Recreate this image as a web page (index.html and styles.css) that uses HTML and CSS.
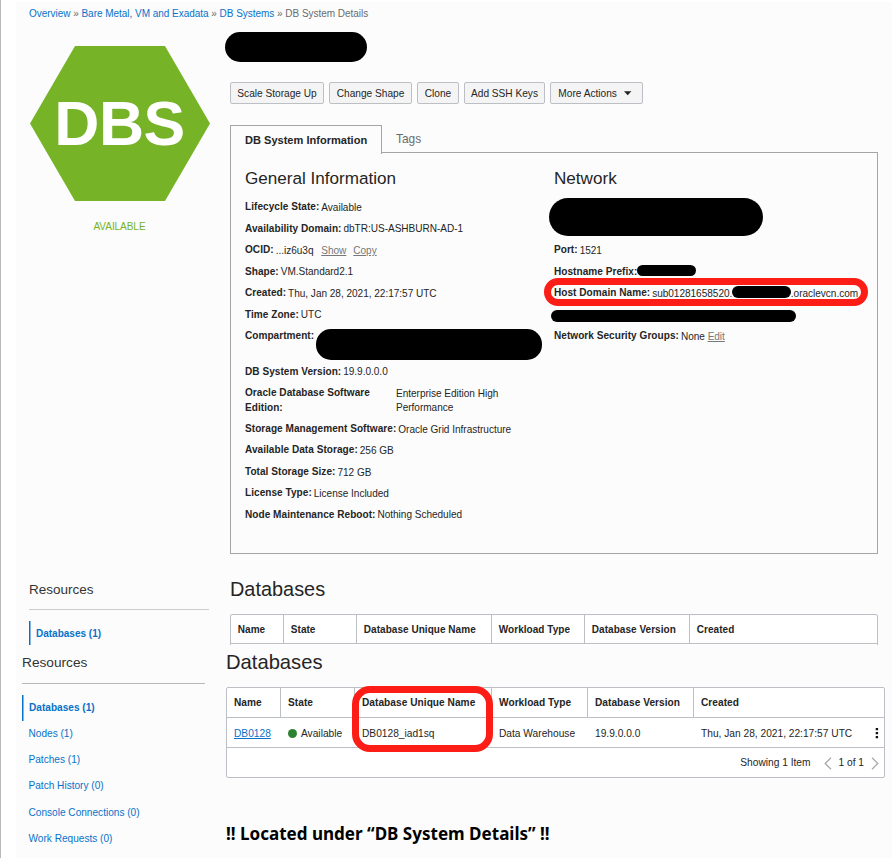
FILE: index.html
```
<!DOCTYPE html>
<html lang="en">
<head>
<meta charset="utf-8">
<title>DB System Details</title>
<link rel="stylesheet" href="styles.css">
</head>
<body>
<div class="page">
  <section class="overview">
    <nav class="crumbs"><a>Overview</a> » <a>Bare Metal, VM and Exadata</a> » <a>DB Systems</a> » DB System Details</nav>
    <div class="columns">
      <aside class="side">
        <div class="hexagon">
          <svg width="180" height="155" viewBox="0 0 180 155"><polygon points="45,0 135,0 180,77.5 135,155 45,155 0,77.5" fill="#76b327"/></svg>
          <span class="hex-label">DBS</span>
        </div>
        <div class="status">AVAILABLE</div>
      </aside>
      <main class="main">
        <div class="redact title-redact"></div>
        <div class="buttons">
          <button class="b1">Scale Storage Up</button><button class="b2">Change Shape</button><button class="b3">Clone</button><button class="b4">Add SSH Keys</button><button class="b5">More Actions <svg width="8" height="5" viewBox="0 0 8 5"><path d="M0 0.3h7.4L3.7 4.3z" fill="#222"/></svg></button>
        </div>
        <div class="tabs"><div class="tab active">DB System Information</div><div class="tab">Tags</div></div>
        <div class="panel">
          <div class="general">
            <h2>General Information</h2>
            <dl>
              <div><dt>Lifecycle State:</dt><dd>Available</dd></div>
              <div><dt>Availability Domain:</dt><dd>dbTR:US-ASHBURN-AD-1</dd></div>
              <div><dt>OCID:</dt><dd>...iz6u3q <a>Show</a><a>Copy</a></dd></div>
              <div><dt>Shape:</dt><dd>VM.Standard2.1</dd></div>
              <div><dt>Created:</dt><dd>Thu, Jan 28, 2021, 22:17:57 UTC</dd></div>
              <div><dt>Time Zone:</dt><dd>UTC</dd></div>
              <div class="double"><dt>Compartment:</dt><span class="redact compartment"></span></div>
              <div><dt>DB System Version:</dt><dd>19.9.0.0.0</dd></div>
              <div class="double"><dt class="wide">Oracle Database Software<br>Edition:</dt><dd>Enterprise Edition High<br>Performance</dd></div>
              <div><dt>Storage Management Software:</dt><dd>Oracle Grid Infrastructure</dd></div>
              <div><dt>Available Data Storage:</dt><dd>256 GB</dd></div>
              <div><dt>Total Storage Size:</dt><dd>712 GB</dd></div>
              <div><dt>License Type:</dt><dd>License Included</dd></div>
              <div><dt>Node Maintenance Reboot:</dt><dd>Nothing Scheduled</dd></div>
            </dl>
          </div>
          <div class="network">
            <h2>Network</h2>
            <dl>
              <div class="gap2"><span class="redact subnet"></span></div>
              <div><dt>Port:</dt><dd>1521</dd></div>
              <div><dt>Hostname Prefix:</dt><span class="redact prefix"></span></div>
              <div><dt>Host Domain Name:</dt><dd class="domain"><span>sub01281658520.</span><span>.oraclevcn.com</span></dd><span class="redact host"></span><span class="ring domain-ring"></span></div>
              <div><span class="redact scan"></span></div>
              <div><dt>Network Security Groups:</dt><dd>None <a class="edit">Edit</a></dd></div>
            </dl>
          </div>
        </div>
      </main>
    </div>
    <div class="columns cut">
      <aside class="side">
        <h3>Resources</h3>
        <ul><li class="current">Databases (1)</li></ul>
      </aside>
      <div class="main">
        <h1>Databases</h1>
        <div class="table">
          <div class="row head"><span>Name</span><span>State</span><span>Database Unique Name</span><span>Workload Type</span><span>Database Version</span><span>Created</span></div>
        </div>
      </div>
    </div>
  </section>
  <section class="resources">
    <aside class="side">
      <h3>Resources</h3>
      <ul><li class="current">Databases (1)</li><li>Nodes (1)</li><li>Patches (1)</li><li>Patch History (0)</li><li>Console Connections (0)</li><li>Work Requests (0)</li></ul>
    </aside>
    <div class="main">
      <h1>Databases</h1>
      <div class="table">
        <div class="row head"><span>Name</span><span>State</span><span>Database Unique Name</span><span>Workload Type</span><span>Database Version</span><span>Created</span></div>
        <div class="row"><span><a>DB0128</a></span><span><i class="dot"></i>Available</span><span>DB0128_iad1sq</span><span>Data Warehouse</span><span>19.9.0.0.0</span><span>Thu, Jan 28, 2021, 22:17:57 UTC
          <svg class="kebab" width="4" height="12" viewBox="0 0 4 12"><path d="M.7 1h2.4v2.2h-2.4zM.7 5h2.4v2.2h-2.4zM.7 9h2.4v2.2h-2.4z" fill="#111"/></svg></span></div>
        <div class="pager"><span>Showing 1 Item</span><svg width="8" height="13" viewBox="0 0 8 13"><path d="M7 .8L1.2 6.5 7 12.2" fill="none" stroke="#aaa" stroke-width="1.3"/></svg><span class="count">1 of 1</span><svg width="8" height="13" viewBox="0 0 8 13"><path d="M1 .8l5.8 5.7L1 12.2" fill="none" stroke="#aaa" stroke-width="1.3"/></svg></div>
        <span class="ring name-ring"></span>
      </div>
      <p class="note">!! Located under “DB System Details” !!</p>
    </div>
  </section>
</div>
</body>
</html>
```
FILE: styles.css
```
* { box-sizing: border-box; }
body { margin: 0; background: #fff; }
.page {
  width: 892px; height: 858px; overflow: hidden;
  border-left: 1px solid #b9b9b9; padding: 2px 0 0 15px;
  font: 10.05px/14.3px "Liberation Sans", Arial, sans-serif; color: #252525;
}
h1, h2, h3, p, dl, dd, ul { margin: 0; padding: 0; font-weight: normal; }
ul { list-style: none; }
.overview { height: 643px; background: #fcfcfc; padding: 4px 0 0 13px; overflow: hidden; }
.crumbs { height: 14px; font-size: 10px; letter-spacing: -.03px; color: #6b6b6b; position: relative; top: .6px; }
.crumbs a { color: #0872c9; }
.columns { display: flex; }
.side { width: 180px; flex: none; }
.overview .main { width: 648px; margin-left: 21px; }
.overview > .columns { height: 534px; }
.hexagon { position: relative; height: 155px; margin-top: 26px; }
.hexagon svg { display: block; margin-left: .5px; }
.hex-label {
  position: absolute; inset: 0; text-align: center; line-height: 154px; left: 1px;
  font-size: 62.5px; letter-spacing: -.5px; font-weight: bold; color: #fff;
}
.status { margin-top: 19px; text-align: center; color: #76b327; font-size: 10.1px; letter-spacing: -.1px; padding-left: 1px; }
.redact { display: block; background: #000; }
.title-redact { width: 142px; height: 30px; margin: 12px 0 0 -5px; border-radius: 15px; }
.buttons { display: flex; gap: 5px; margin-top: 20px; }
button {
  height: 22px; padding: 1px 0 0; font: 10.15px/20px "Liberation Sans", Arial, sans-serif; color: #252525;
  background: #f4f4f4; border: 1px solid #bcc0c5; border-radius: 2px;
}
button svg { margin-left: 4px; vertical-align: 1px; }
.b1 { width: 94px; } .b2 { width: 83px; } .b3 { width: 42px; } .b4 { width: 81px; } .b5 { width: 93px; }
.b5 { padding-right: 3px; }
.tabs { display: flex; height: 28px; margin-top: 21px; position: relative; z-index: 1; }
.tab { padding: 0 14px; font-size: 11.9px; line-height: 28px; color: #6b6b6b; }
.tab.active {
  width: 152px; height: 29px; font-size: 11.05px; line-height: 28px; font-weight: bold; color: #252525;
  background: #fcfcfc; border: 1px solid #a5a5a5; border-bottom: 0; white-space: nowrap;
}
.panel { display: flex; height: 402px; margin-top: -1px; border: 1px solid #a5a5a5; padding: 14px 0 0 14px; }
.general { width: 309px; }
h2 { font-size: 17.1px; line-height: 24px; margin-bottom: 9px; }
dl { letter-spacing: -.02px; }
dl > div { display: flex; position: relative; height: 14.3px; margin-bottom: 7.16px; white-space: nowrap; top: .3px; }
dl > .double { height: 28.6px; }
dl > .gap2 { height: 35.74px; }
dt { font-weight: bold; margin-right: 2px; letter-spacing: .04px; }
dt.wide { width: 149px; }
dd { padding-top: .7px; }
dd a { color: #777; text-decoration: underline; margin-left: 5px; }
dd a + a { margin-left: 7px; }
dd a.edit { margin-left: 0; }
.compartment { position: absolute; left: 71px; top: 0; width: 226px; height: 31px; border-radius: 15px; }
.subnet { position: absolute; left: -5px; top: -2px; width: 214px; height: 38px; border-radius: 19px; }
.prefix { position: absolute; left: 83px; top: 0; width: 59px; height: 11px; border-radius: 6px; }
.domain { display: flex; width: 206px; justify-content: space-between; }
.host { position: absolute; left: 178px; top: 0; width: 59px; height: 12px; border-radius: 6px; }
.ring { position: absolute; border: 7px solid #fc1d17; }
.domain-ring { left: -10px; top: -8px; width: 324px; height: 28px; border-radius: 14px; }
.scan { position: absolute; left: -3px; top: 2px; width: 245px; height: 12px; border-radius: 6px; }
h3 { font-size: 13.5px; line-height: 18px; color: #333; }
.cut { padding-top: 26px; }
.cut h3 { margin-top: 1px; height: 29px; line-height: 18px; border-bottom: 1px solid #ccc; }
.cut ul { margin-top: 11px; }
.cut li { height: 26px; line-height: 26px; font-size: 10px; }
li { color: #0872c9; padding-left: 6.5px; line-height: 26.25px; }
li.current { font-weight: bold; border-left: 1px solid #0872c9; box-shadow: inset .5px 0 #0872c9; padding-left: 6px; }
h1 { font-size: 19.9px; line-height: 23px; padding-bottom: 1px; margin-top: -2px; }
.table { position: relative; border: 1px solid #bcc0c5; background: #fff; border-radius: 2px; white-space: nowrap; }
.row { display: grid; height: 30px; line-height: 31px; border-bottom: 1px solid #bcc0c5; }
.row > span { position: relative; padding-left: 6.8px; }
.head { font-weight: bold; font-size: 10px; letter-spacing: .04px; }
.head > span + span { border-left: 1px solid #bcc0c5; }
.cut .table { margin-top: 12px; height: 40px; }
.cut .row { height: 29px; line-height: 29px; grid-template-columns: 52px 73px 135px 93px 105px 1fr; }
.resources { display: flex; height: 213px; background: #fcfcfc; padding: 7px 0 0 6px; }
.resources .side { width: 183px; }
.resources h3 { font-size: 13.7px; height: 32px; line-height: 22px; border-bottom: 1px solid #b9b9b9; }
.resources ul { margin-top: 10px; font-size: 10.1px; }
.resources li { position: relative; top: .6px; }
.resources .main { width: 659px; margin-left: 21px; }
.resources h1 { font-size: 20.2px; line-height: 24px; padding: 0; margin-top: -2px; }
.resources .table { margin-top: 13px; height: 91px; }
.resources .row { grid-template-columns: 53px 75px 136px 96px 106px 1fr; font-size: 10.2px; }
.resources .row > span { padding-left: 7px; }
.resources .head { font-size: 10.15px; line-height: 30px; }
.resources .row:not(.head) > span + span { padding-left: 8px; }
.resources .row > span:nth-child(3) { left: -1px; }
.row a { color: #0872c9; text-decoration: underline; }
.dot { display: inline-block; width: 9px; height: 9px; border-radius: 50%; background: #2f8132; margin-right: 4px; vertical-align: -1px; }
.kebab { position: absolute; right: 5px; top: 9px; }
.pager { display: flex; align-items: center; height: 31px; justify-content: flex-end; padding-right: 5px; font-size: 10.2px; }
.pager svg { margin-left: 13px; }
.pager .count { margin-left: 7px; }
.pager .count + svg { margin-left: 7px; }
.name-ring { left: 125px; top: -2px; width: 141px; height: 66px; border-radius: 18px; }
.note { margin-top: 43px; font: bold 17.05px/26px "Noto Sans", "Open Sans", sans-serif; color: #000; white-space: nowrap; }
```
